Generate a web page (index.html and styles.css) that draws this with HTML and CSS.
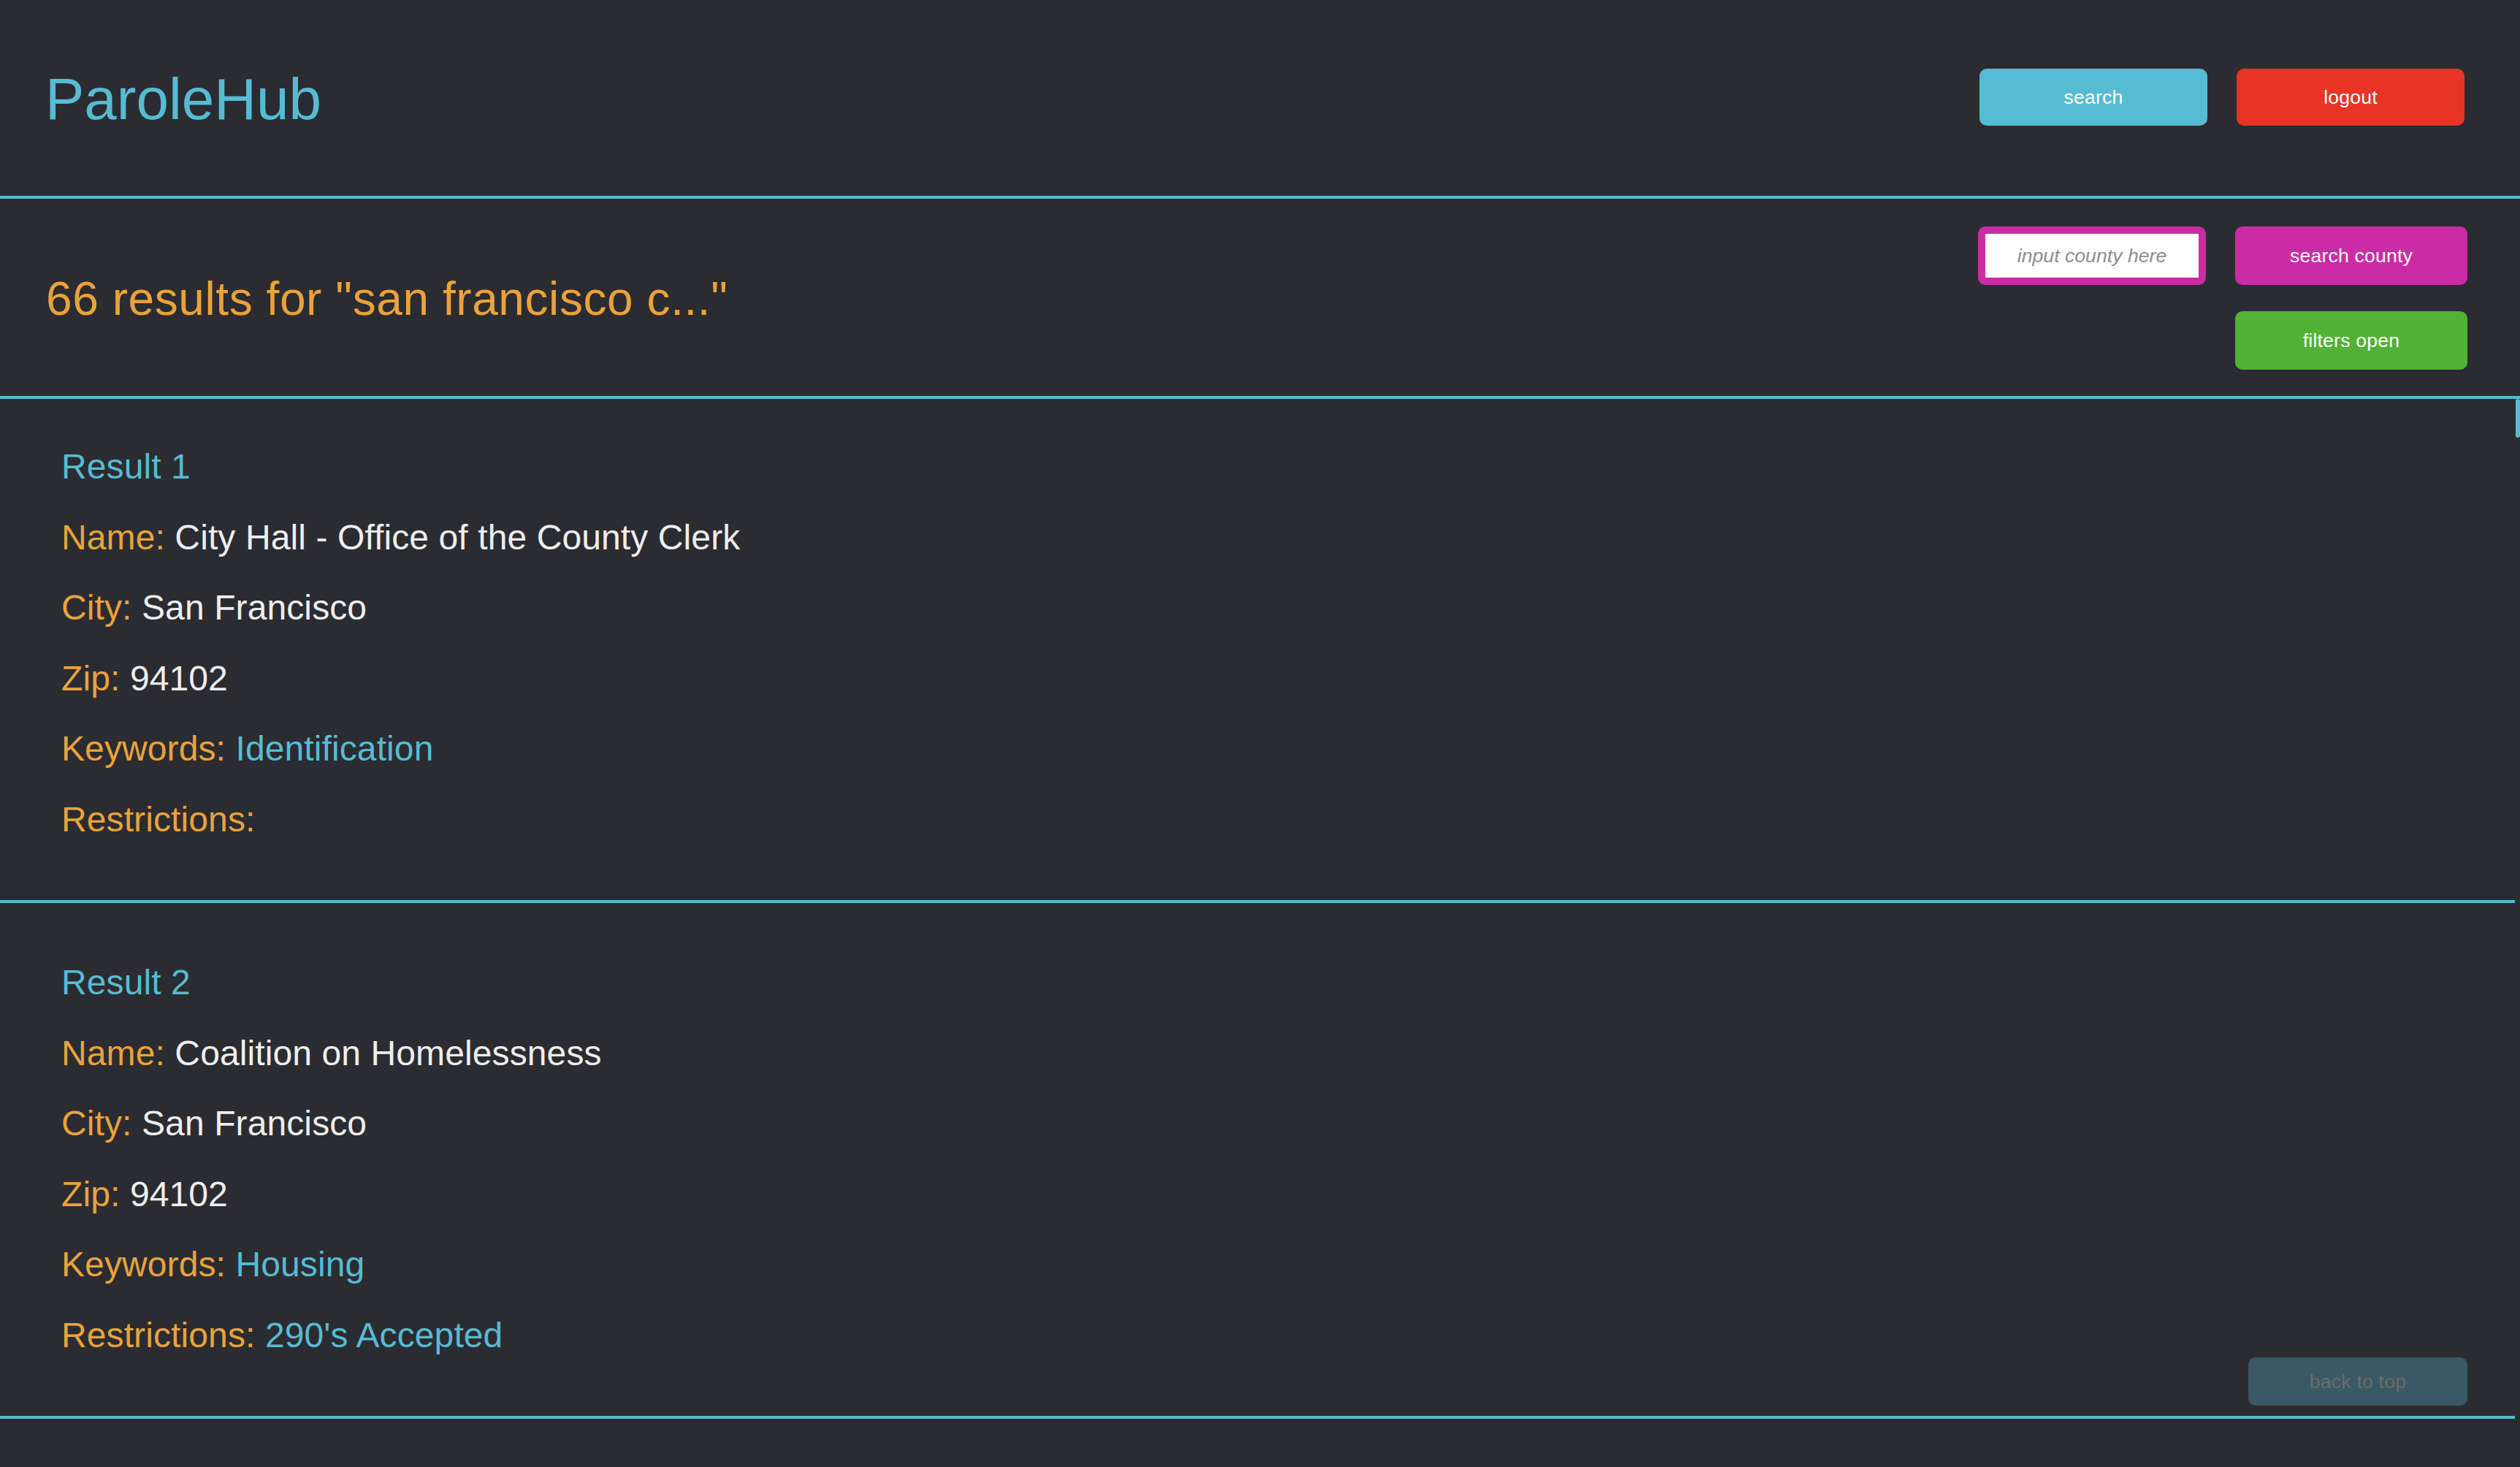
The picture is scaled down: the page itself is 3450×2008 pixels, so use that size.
FILE: index.html
```html
<!DOCTYPE html>
<html lang="en">
<head>
<meta charset="utf-8">
<title>ParoleHub</title>
<link rel="stylesheet" href="styles.css">
</head>
<body>
  <header class="topbar">
    <h1 class="logo">ParoleHub</h1>
    <nav class="top-actions">
      <button class="btn btn-blue">search</button>
      <button class="btn btn-red">logout</button>
    </nav>
  </header>

  <section class="results-header">
    <h2 class="results-title">66 results for "san francisco c..."</h2>
    <div class="controls">
      <input class="county-input" type="text" placeholder="input county here">
      <button class="btn btn-wide btn-magenta">search county</button>
      <button class="btn btn-wide btn-green filters">filters open</button>
    </div>
  </section>

  <main class="results-area">
    <div class="results">
      <article class="result">
        <p class="result-title">Result 1</p>
        <p><span class="label">Name:</span> <span class="value">City Hall - Office of the County Clerk</span></p>
        <p><span class="label">City:</span> <span class="value">San Francisco</span></p>
        <p><span class="label">Zip:</span> <span class="value">94102</span></p>
        <p><span class="label">Keywords:</span> <span class="tag">Identification</span></p>
        <p><span class="label">Restrictions:</span></p>
      </article>
      <article class="result">
        <p class="result-title">Result 2</p>
        <p><span class="label">Name:</span> <span class="value">Coalition on Homelessness</span></p>
        <p><span class="label">City:</span> <span class="value">San Francisco</span></p>
        <p><span class="label">Zip:</span> <span class="value">94102</span></p>
        <p><span class="label">Keywords:</span> <span class="tag">Housing</span></p>
        <p><span class="label">Restrictions:</span> <span class="tag">290's Accepted</span></p>
      </article>
    </div>
    <div class="scroll-track"><div class="scroll-thumb"></div></div>
  </main>

  <button class="btn back-to-top">back to top</button>
</body>
</html>
```
FILE: styles.css
```css
html, body {
  margin: 0;
  padding: 0;
}

body {
  background: #2b2c31;
  font-family: "Liberation Sans", Arial, Helvetica, sans-serif;
  color: #eeeeee;
  letter-spacing: 0.0065em;
  min-height: 2008px;
}

.topbar {
  display: flex;
  justify-content: space-between;
  align-items: center;
  height: 268px;
  padding: 0 76px 0 62px;
  border-bottom: 4px solid #56bcd3;
}

.logo {
  margin: 3px 0 0 0;
  font-size: 80px;
  font-weight: normal;
  line-height: 92px;
  letter-spacing: 0;
  color: #56bcd3;
}

.top-actions {
  display: flex;
  gap: 40px;
  margin-bottom: 2px;
}

.btn {
  font-family: "Liberation Sans", Arial, Helvetica, sans-serif;
  font-size: 26.67px;
  letter-spacing: 0.0065em;
  color: #ffffff;
  border: none;
  border-radius: 10px;
  width: 312px;
  height: 78px;
  padding: 0;
  cursor: pointer;
}

.btn-blue { background: #56bcd3; }
.btn-red { background: #e73424; }
.btn-magenta { background: #cb2ca5; }
.btn-green { background: #52b236; }

.btn-wide {
  width: 318px;
  height: 80px;
}

.results-header {
  display: flex;
  justify-content: space-between;
  align-items: center;
  height: 270px;
  padding: 0 72px 0 63px;
  border-bottom: 4px solid #56bcd3;
}

.results-title {
  margin: 0;
  padding-top: 4px;
  font-size: 64px;
  font-weight: normal;
  line-height: 74px;
  letter-spacing: 0.009em;
  color: #e9a33b;
}

.controls {
  display: grid;
  grid-template-columns: 312px 318px;
  column-gap: 40px;
  row-gap: 36px;
  margin-top: 2px;
}

.county-input {
  box-sizing: border-box;
  width: 312px;
  height: 80px;
  border: 10px solid #cb2ca5;
  border-radius: 10px;
  background: #ffffff;
  font-family: "Liberation Sans", Arial, Helvetica, sans-serif;
  font-size: 26.67px;
  text-align: center;
  padding: 0;
  outline: none;
}

.county-input::placeholder {
  color: #8e8e8e;
  font-style: italic;
}

.filters {
  grid-column: 2;
}

.results-area {
  display: flex;
}

.results {
  flex: 1;
}

.scroll-track {
  width: 7px;
  flex: none;
}

.scroll-thumb {
  width: 6px;
  height: 53px;
  margin-left: 1px;
  border-radius: 3px;
  background: #56bcd3;
}

.result {
  padding: 37px 82px 37.5px 84px;
  border-bottom: 4px solid #56bcd3;
}

.result:first-child {
  padding-top: 21px;
}

.result p {
  margin: 48px 0;
  font-size: 48px;
  line-height: 48.6px;
}

.result .result-title {
  color: #56bcd3;
}

.label {
  color: #e9a33b;
}

.value {
  color: #eeeeee;
}

.tag {
  color: #56bcd3;
}

.back-to-top {
  position: fixed;
  right: 72px;
  bottom: 84px;
  width: 300px;
  height: 66px;
  background: #3a5964;
  color: #6c6c6c;
}
```
